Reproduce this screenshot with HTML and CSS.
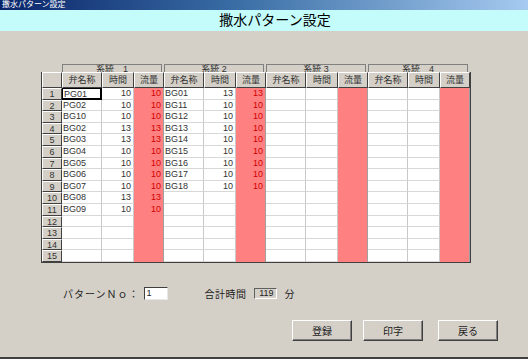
FILE: index.html
```html
<!DOCTYPE html>
<html>
<head>
  <title>撒水パターン設定</title>
  <link rel="stylesheet" href="styles.css">
</head>
<body>
  <div class="window">
    <div class="titlebar">撒水パターン設定</div>
    <div class="banner">撒水パターン設定</div>

    <div class="content">
      <div class="groups">
        <div class="group">系統　1</div>
        <div class="group">系統 2</div>
        <div class="group">系統 3</div>
        <div class="group">系統　4</div>
      </div>

      <div class="sheet">
        <div class="head"></div>
        <div class="head">弁名称</div><div class="head">時間</div><div class="head">流量</div>
        <div class="head">弁名称</div><div class="head">時間</div><div class="head">流量</div>
        <div class="head">弁名称</div><div class="head">時間</div><div class="head">流量</div>
        <div class="head">弁名称</div><div class="head">時間</div><div class="head">流量</div>

        <!-- 1 -->
        <div class="num">1</div>
        <div class="name sel">PG01</div><div class="time">10</div><div class="flow">10</div>
        <div class="name">BG01</div><div class="time">13</div><div class="flow">13</div>
        <div class="name"></div><div class="time"></div><div class="flow"></div>
        <div class="name"></div><div class="time"></div><div class="flow"></div>
        <!-- 2 -->
        <div class="num">2</div>
        <div class="name">PG02</div><div class="time">10</div><div class="flow">10</div>
        <div class="name">BG11</div><div class="time">10</div><div class="flow">10</div>
        <div class="name"></div><div class="time"></div><div class="flow"></div>
        <div class="name"></div><div class="time"></div><div class="flow"></div>
        <!-- 3 -->
        <div class="num">3</div>
        <div class="name">BG10</div><div class="time">10</div><div class="flow">10</div>
        <div class="name">BG12</div><div class="time">10</div><div class="flow">10</div>
        <div class="name"></div><div class="time"></div><div class="flow"></div>
        <div class="name"></div><div class="time"></div><div class="flow"></div>
        <!-- 4 -->
        <div class="num">4</div>
        <div class="name">BG02</div><div class="time">13</div><div class="flow">13</div>
        <div class="name">BG13</div><div class="time">10</div><div class="flow">10</div>
        <div class="name"></div><div class="time"></div><div class="flow"></div>
        <div class="name"></div><div class="time"></div><div class="flow"></div>
        <!-- 5 -->
        <div class="num">5</div>
        <div class="name">BG03</div><div class="time">13</div><div class="flow">13</div>
        <div class="name">BG14</div><div class="time">10</div><div class="flow">10</div>
        <div class="name"></div><div class="time"></div><div class="flow"></div>
        <div class="name"></div><div class="time"></div><div class="flow"></div>
        <!-- 6 -->
        <div class="num">6</div>
        <div class="name">BG04</div><div class="time">10</div><div class="flow">10</div>
        <div class="name">BG15</div><div class="time">10</div><div class="flow">10</div>
        <div class="name"></div><div class="time"></div><div class="flow"></div>
        <div class="name"></div><div class="time"></div><div class="flow"></div>
        <!-- 7 -->
        <div class="num">7</div>
        <div class="name">BG05</div><div class="time">10</div><div class="flow">10</div>
        <div class="name">BG16</div><div class="time">10</div><div class="flow">10</div>
        <div class="name"></div><div class="time"></div><div class="flow"></div>
        <div class="name"></div><div class="time"></div><div class="flow"></div>
        <!-- 8 -->
        <div class="num">8</div>
        <div class="name">BG06</div><div class="time">10</div><div class="flow">10</div>
        <div class="name">BG17</div><div class="time">10</div><div class="flow">10</div>
        <div class="name"></div><div class="time"></div><div class="flow"></div>
        <div class="name"></div><div class="time"></div><div class="flow"></div>
        <!-- 9 -->
        <div class="num">9</div>
        <div class="name">BG07</div><div class="time">10</div><div class="flow">10</div>
        <div class="name">BG18</div><div class="time">10</div><div class="flow">10</div>
        <div class="name"></div><div class="time"></div><div class="flow"></div>
        <div class="name"></div><div class="time"></div><div class="flow"></div>
        <!-- 10 -->
        <div class="num">10</div>
        <div class="name">BG08</div><div class="time">13</div><div class="flow">13</div>
        <div class="name"></div><div class="time"></div><div class="flow"></div>
        <div class="name"></div><div class="time"></div><div class="flow"></div>
        <div class="name"></div><div class="time"></div><div class="flow"></div>
        <!-- 11 -->
        <div class="num">11</div>
        <div class="name">BG09</div><div class="time">10</div><div class="flow">10</div>
        <div class="name"></div><div class="time"></div><div class="flow"></div>
        <div class="name"></div><div class="time"></div><div class="flow"></div>
        <div class="name"></div><div class="time"></div><div class="flow"></div>
        <!-- 12 -->
        <div class="num">12</div>
        <div class="name"></div><div class="time"></div><div class="flow"></div>
        <div class="name"></div><div class="time"></div><div class="flow"></div>
        <div class="name"></div><div class="time"></div><div class="flow"></div>
        <div class="name"></div><div class="time"></div><div class="flow"></div>
        <!-- 13 -->
        <div class="num">13</div>
        <div class="name"></div><div class="time"></div><div class="flow"></div>
        <div class="name"></div><div class="time"></div><div class="flow"></div>
        <div class="name"></div><div class="time"></div><div class="flow"></div>
        <div class="name"></div><div class="time"></div><div class="flow"></div>
        <!-- 14 -->
        <div class="num">14</div>
        <div class="name"></div><div class="time"></div><div class="flow"></div>
        <div class="name"></div><div class="time"></div><div class="flow"></div>
        <div class="name"></div><div class="time"></div><div class="flow"></div>
        <div class="name"></div><div class="time"></div><div class="flow"></div>
        <!-- 15 -->
        <div class="num">15</div>
        <div class="name"></div><div class="time"></div><div class="flow"></div>
        <div class="name"></div><div class="time"></div><div class="flow"></div>
        <div class="name"></div><div class="time"></div><div class="flow"></div>
        <div class="name"></div><div class="time"></div><div class="flow"></div>
      </div>

      <div class="info">
        <span class="label-no">パターンＮｏ：</span>
        <div class="input">1</div>
        <span class="label-total">合計時間</span>
        <div class="total">119</div>
        <span class="unit">分</span>
      </div>

      <div class="actions">
        <button class="btn">登録</button>
        <button class="btn">印字</button>
        <button class="btn btn-back">戻る</button>
      </div>
    </div>
  </div>
</body>
</html>
```

FILE: styles.css
```css
body {
  margin: 0;
  background: #d4d0c8;
  color: #222;
  font-family: "Liberation Sans", "Noto Sans CJK JP", sans-serif;
}
.window {
  width: 528px;
  height: 359px;
  box-sizing: border-box;
  border-bottom: 2px solid #404040;
  background: #d4d0c8;
  overflow: hidden;
}
.titlebar {
  height: 10px;
  padding-left: 2px;
  background: linear-gradient(to right, #0a246a, #3a6ea5 45%, #a6caf0);
  color: #fff;
  font-size: 8px;
  line-height: 10px;
}
.banner {
  height: 21px;
  background: #c4fcfc;
  color: #000;
  text-align: center;
  font-size: 14px;
  line-height: 21px;
  padding-left: 22px;
}
.content {
  padding-left: 41px;
}
.groups {
  display: grid;
  grid-template-columns: repeat(4, 102px);
  margin-top: 33px;
  padding-left: 21px;
}
.group {
  height: 8px;
  margin-right: 2px;
  border-top: 1px solid #808080;
  border-left: 1px solid #808080;
  border-right: 1px solid #808080;
  box-sizing: border-box;
  text-align: center;
  font-size: 9px;
  line-height: 8px;
  color: #333;
}
.sheet {
  display: grid;
  grid-template-columns: 20px repeat(4, 40px 32px 30px);
  grid-template-rows: 16px repeat(15, 11.6px);
  width: 428px;
  border-left: 1px solid #404040;
  border-right: 1px solid #404040;
  border-bottom: 1px solid #404040;
  background: #fff;
  font-size: 9px;
}
.sheet > div {
  box-sizing: border-box;
  overflow: hidden;
  white-space: nowrap;
}
.head, .num {
  background: #d4d0c8;
  border-top: 1px solid #fff;
  border-left: 1px solid #fff;
  border-right: 1px solid #404040;
  border-bottom: 1px solid #404040;
  text-align: center;
  color: #333;
}
.head {
  line-height: 14px;
}
.num {
  line-height: 10px;
}
.name, .time {
  border-right: 1px solid #c8c8c8;
  border-bottom: 1px solid #d8d8d8;
  line-height: 10px;
  color: #333;
}
.name {
  padding-left: 1px;
}
.time {
  text-align: right;
  padding-right: 2px;
}
.flow {
  background: #ff8080;
  color: #d00000;
  border-right: 1px solid #a0a0a0;
  text-align: right;
  padding-right: 2px;
  line-height: 11px;
}
.sel {
  border: 1px solid #000;
  border-right-width: 2px;
  border-bottom-width: 2px;
}
.info {
  display: flex;
  align-items: center;
  margin-top: 24px;
  padding-left: 22px;
  height: 14px;
  font-size: 10px;
}
.label-no {
  letter-spacing: 1px;
}
.input {
  width: 24px;
  height: 13px;
  box-sizing: border-box;
  margin-left: 4px;
  padding-left: 2px;
  background: #fff;
  border-top: 1px solid #404040;
  border-left: 1px solid #404040;
  border-right: 1px solid #e8e8e8;
  border-bottom: 1px solid #e8e8e8;
  font-size: 9px;
  line-height: 11px;
}
.label-total {
  margin-left: 37px;
  letter-spacing: 0.5px;
}
.total {
  width: 23px;
  height: 11px;
  box-sizing: border-box;
  margin-left: 7px;
  padding-right: 2px;
  border-top: 1px solid #606060;
  border-left: 1px solid #606060;
  border-right: 1px solid #fff;
  border-bottom: 1px solid #fff;
  text-align: right;
  font-size: 9px;
  line-height: 9px;
}
.unit {
  margin-left: 8px;
}
.actions {
  display: flex;
  gap: 11px;
  margin-top: 19px;
  padding-left: 251px;
}
.btn {
  width: 60px;
  height: 21px;
  padding: 0;
  background: #d4d0c8;
  color: #222;
  border-top: 1px solid #fff;
  border-left: 1px solid #fff;
  border-right: 1px solid #404040;
  border-bottom: 1px solid #404040;
  box-shadow: inset -1px -1px #808080;
  font-family: "Liberation Sans", "Noto Sans CJK JP", sans-serif;
  font-size: 10px;
}
.btn-back {
  margin-left: 4px;
}
```
